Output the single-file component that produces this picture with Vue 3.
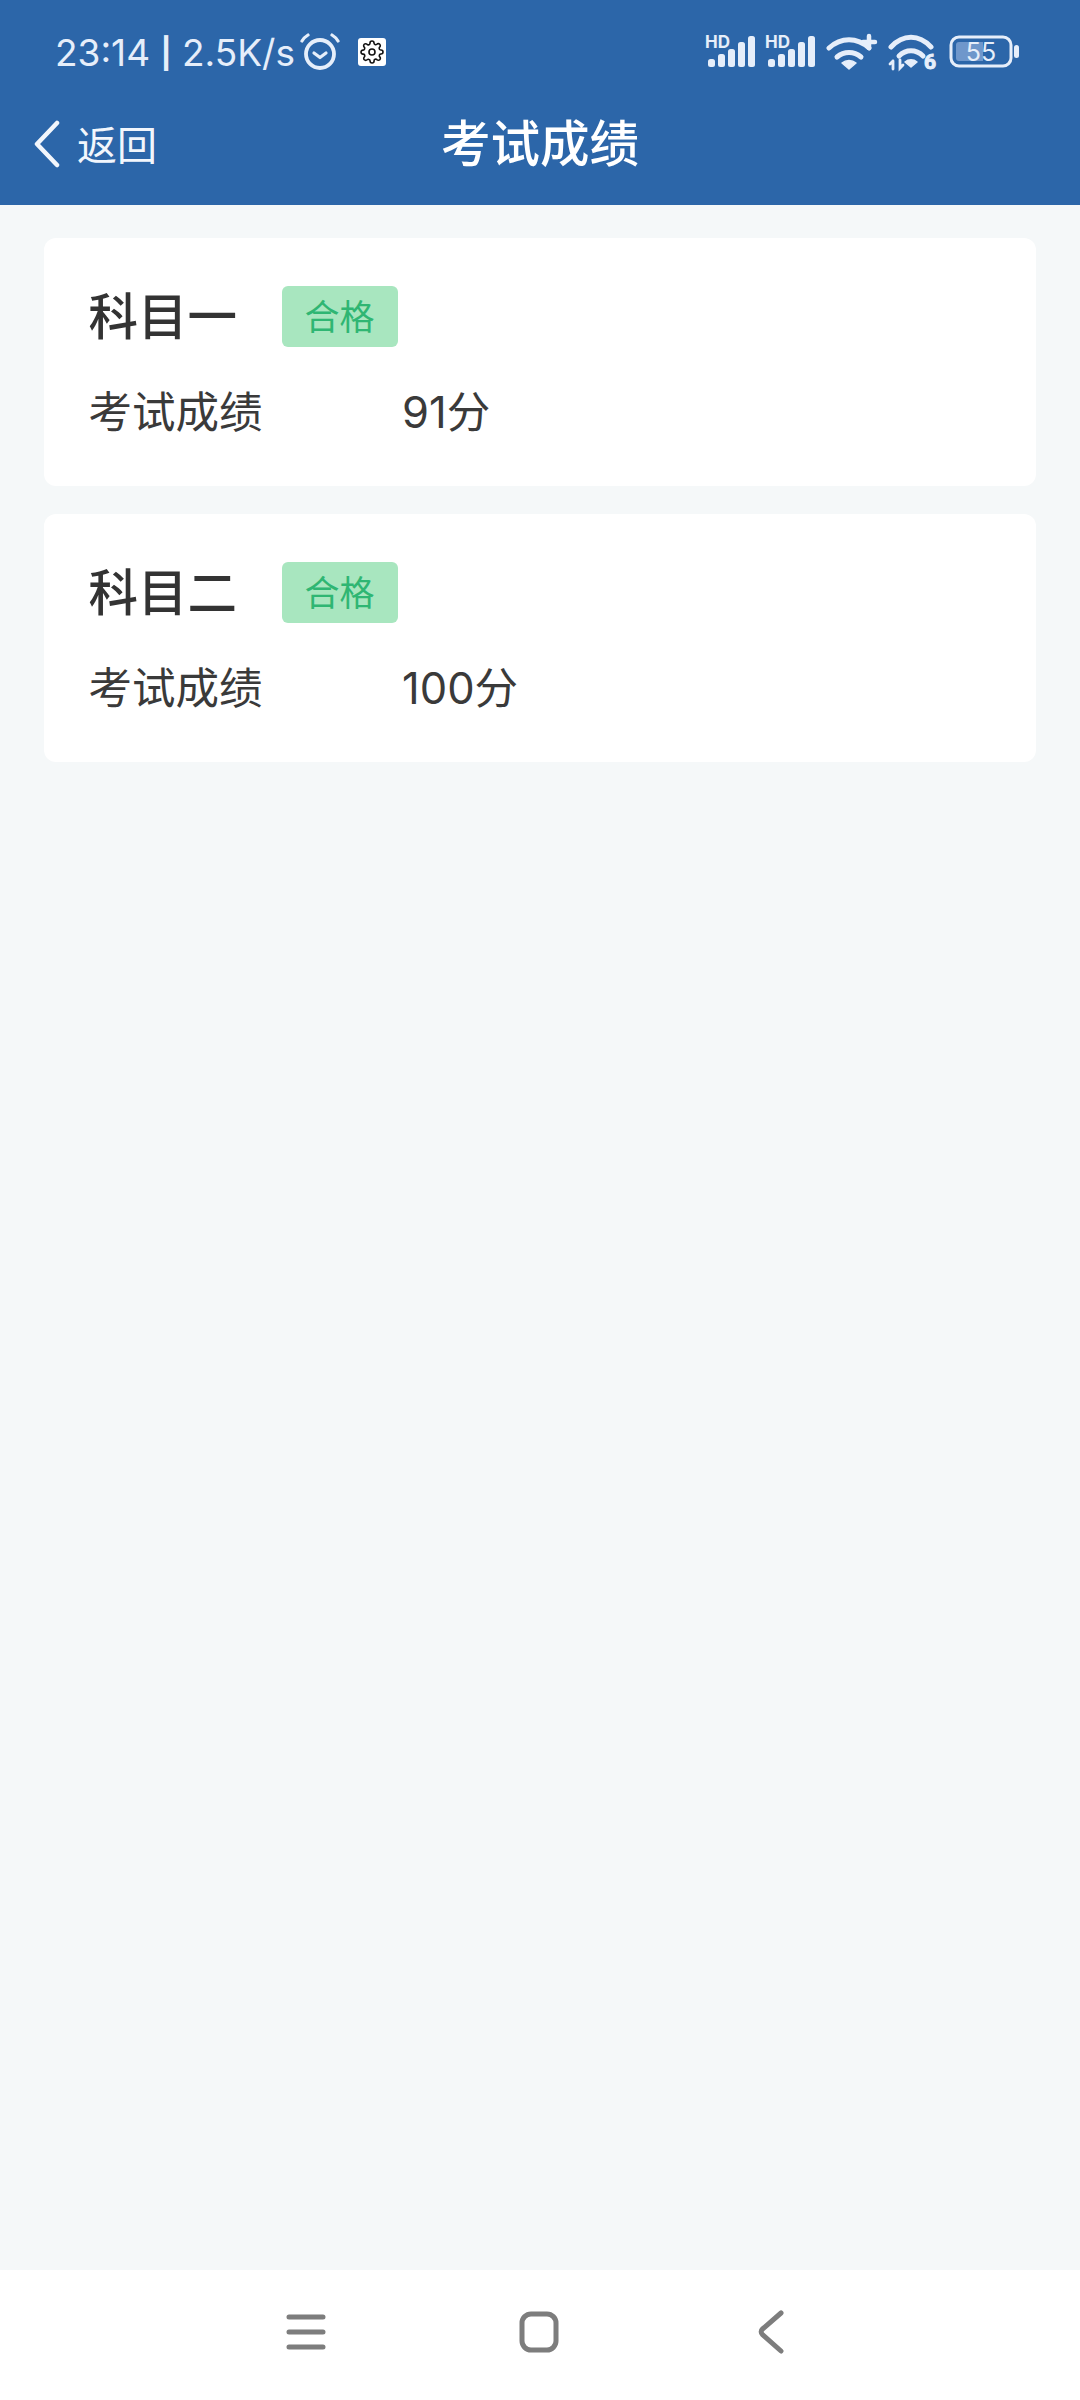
<script setup>
const results = [
  { name: "科目一", status: "合格", score: "91分" },
  { name: "科目二", status: "合格", score: "100分" },
];

const bars = [
  { x: 3, y: 25, h: 8 },
  { x: 13, y: 20, h: 13 },
  { x: 23, y: 15, h: 18 },
  { x: 33, y: 8, h: 25 },
  { x: 43, y: 2, h: 31 },
];
</script>

<template>
  <div class="page">
    <header class="header">
      <div class="status-bar">
        <div class="status-left">
          <span class="clock">23:14 <span class="clock-sep">|</span> 2.5K/s</span>
          <svg class="alarm" width="40" height="38" viewBox="0 0 40 38" fill="none" stroke="#e6eefa" stroke-linecap="round">
            <circle cx="20" cy="21" r="14" stroke-width="3.800" />
            <path d="M14 20l6 4.500 6-4.500" stroke-width="3.200" stroke-linejoin="round" />
            <path d="M2 8c1.500-2.500 3.500-4.500 6-6M38 8c-1.500-2.500-3.500-4.500-6-6" stroke-width="3.200" />
          </svg>
          <span class="gear-box">
            <svg width="24" height="24" viewBox="0 0 24 24" fill="none" stroke="#111" stroke-width="1.600" stroke-linejoin="round">
              <circle cx="12" cy="12" r="3" />
              <path d="M19.400 15a1.650 1.650 0 0 0 .33 1.820l.06.06a2 2 0 0 1 0 2.830 2 2 0 0 1-2.830 0l-.06-.06a1.650 1.650 0 0 0-1.820-.33 1.650 1.650 0 0 0-1 1.510V21a2 2 0 0 1-2 2 2 2 0 0 1-2-2v-.09A1.650 1.650 0 0 0 9 19.400a1.650 1.650 0 0 0-1.820.33l-.06.06a2 2 0 0 1-2.830 0 2 2 0 0 1 0-2.830l.06-.06a1.650 1.650 0 0 0 .33-1.820 1.650 1.650 0 0 0-1.510-1H3a2 2 0 0 1-2-2 2 2 0 0 1 2-2h.09A1.650 1.650 0 0 0 4.600 9a1.650 1.650 0 0 0-.33-1.820l-.06-.06a2 2 0 0 1 0-2.830 2 2 0 0 1 2.830 0l.06.06a1.650 1.650 0 0 0 1.820.33H9a1.650 1.650 0 0 0 1-1.510V3a2 2 0 0 1 2-2 2 2 0 0 1 2 2v.09a1.650 1.650 0 0 0 1 1.510 1.650 1.650 0 0 0 1.820-.33l.06-.06a2 2 0 0 1 2.830 0 2 2 0 0 1 0 2.830l-.06.06a1.650 1.650 0 0 0-.33 1.820V9a1.650 1.650 0 0 0 1.510 1H21a2 2 0 0 1 2 2 2 2 0 0 1-2 2h-.09a1.650 1.650 0 0 0-1.510 1z" />
            </svg>
          </span>
        </div>
        <div class="status-right">
          <svg v-for="n in 2" :key="n" width="52" height="48" viewBox="0 -6 52 48">
            <text x="0" y="14" class="hd">HD</text>
            <rect v-for="bar in bars" :key="bar.x" :x="bar.x" :y="bar.y" width="7" :height="bar.h" rx="2.500" fill="#e6eefa" />
          </svg>
          <svg class="wifi-plus" width="52" height="38" viewBox="0 0 52 38" fill="none" stroke="#e6eefa" stroke-linecap="round">
            <path d="M3 15c12-11 28-11 40 0" stroke-width="5" />
            <path d="M11 24c7-6 17-6 24 0" stroke-width="5" />
            <path d="M23 36l-7-6c4-3.500 10-3.500 14 0z" fill="#e6eefa" stroke="#e6eefa" stroke-width="1.500" stroke-linejoin="round" />
            <path d="M43 3v12M37 9h12" stroke-width="4.500" />
          </svg>
          <svg width="50" height="46" viewBox="0 -4 50 46" fill="none" stroke="#e6eefa" stroke-linecap="round">
            <path d="M3 14c12-13 28-13 40 0" stroke-width="5" />
            <path d="M11 23c7-7 17-7 24 0" stroke-width="5" />
            <path d="M23 34l-6-5c3.500-3 8.500-3 12 0z" fill="#e6eefa" stroke="#e6eefa" stroke-width="1.500" stroke-linejoin="round" />
            <path d="M5 28v8M2 31l3-3M12 27v8l3-3" stroke-width="2.800" />
            <text x="36" y="36" class="six">6</text>
          </svg>
          <svg class="battery" width="70" height="34" viewBox="0 0 70 34">
            <rect x="2" y="2" width="60" height="29" rx="8" fill="none" stroke="#e6eefa" stroke-width="3" />
            <path d="M7 10a3 3 0 0 1 3-3h24v19H10a3 3 0 0 1-3-3z" fill="#6f97cb" />
            <rect x="65" y="10" width="5" height="13" rx="2.500" fill="#e6eefa" />
            <text x="32" y="26" text-anchor="middle" class="level">55</text>
          </svg>
        </div>
      </div>
      <div class="nav-bar">
        <div class="back">
          <svg width="28" height="48" viewBox="0 0 28 48" fill="none" stroke="#f2f6fc" stroke-width="4.500" stroke-linecap="round" stroke-linejoin="round">
            <path d="M24 3L4 24l20 21" />
          </svg>
          <span class="back-text">返回</span>
        </div>
        <h1 class="title">考试成绩</h1>
        <div></div>
      </div>
    </header>

    <main class="content">
      <section v-for="item in results" :key="item.name" class="card">
        <div class="card-head">
          <span class="subject">{{ item.name }}</span>
          <span class="badge">{{ item.status }}</span>
        </div>
        <div class="row">
          <span class="row-label">考试成绩</span>
          <span>{{ item.score }}</span>
        </div>
      </section>
    </main>

    <footer class="system-nav">
      <svg width="42" height="38" viewBox="0 0 42 38" fill="none" stroke="#7d7d7d" stroke-width="5" stroke-linecap="round">
        <path d="M4 4h34M4 19h34M4 34h34" />
      </svg>
      <svg class="home" width="40" height="42" viewBox="0 0 40 42" fill="none" stroke="#7d7d7d" stroke-width="5">
        <rect x="3" y="3" width="34" height="36" rx="9" />
      </svg>
      <svg width="28" height="44" viewBox="0 0 28 44" fill="none" stroke="#7d7d7d" stroke-width="5" stroke-linecap="round" stroke-linejoin="round">
        <path d="M24 3L5.500 19c-1.800 1.600-1.800 4 0 5.600L24 41" />
      </svg>
    </footer>
  </div>
</template>

<style>
html,
body {
  margin: 0;
  background: #f5f8f9;
}
</style>

<style scoped>
.page {
  width: 1080px;
  height: 2400px;
  display: flex;
  flex-direction: column;
  background: #f5f8f9;
  font-family: Inter, "Noto Sans CJK SC", sans-serif;
  color: #333;
}

.header {
  height: 205px;
  background: #2c66a9;
  color: #fff;
}

.status-bar {
  height: 104px;
  display: flex;
  align-items: center;
  justify-content: space-between;
  padding: 0 61px 0 55px;
}

.status-left,
.status-right {
  display: flex;
  align-items: center;
}

.clock {
  width: 245px;
  font-size: 37px;
  color: #e6eefa;
  white-space: nowrap;
}

.clock-sep {
  font-size: 30px;
  font-weight: 700;
  vertical-align: 2px;
}

.alarm {
  margin-left: 0;
}

.gear-box {
  width: 28px;
  height: 28px;
  margin-left: 18px;
  display: flex;
  align-items: center;
  justify-content: center;
  background: #fff;
  border-radius: 3px;
}

.status-right {
  gap: 8px;
}

.hd {
  font-size: 17px;
  font-weight: 700;
  fill: #e6eefa;
}

.six {
  font-family: Roboto, sans-serif;
  font-size: 21px;
  font-weight: 700;
  fill: #e6eefa;
}

.level {
  font-size: 25px;
  fill: #e6eefa;
}

.wifi-plus {
  margin-left: 1px;
  margin-right: 2px;
}

.battery {
  margin-left: 3px;
}

.nav-bar {
  height: 80px;
  display: grid;
  grid-template-columns: 1fr auto 1fr;
  align-items: center;
  padding: 0 33px;
}

.back {
  display: flex;
  align-items: center;
  gap: 16px;
  font-size: 40px;
  color: #f2f6fc;
}

.back-text {
  margin-bottom: 3px;
}

.title {
  margin: 0 0 8px;
  font-size: 49.500px;
  font-weight: 500;
}

.content {
  flex: 1;
  display: flex;
  flex-direction: column;
  gap: 28px;
  padding: 33px 44px;
}

.card {
  height: 248px;
  box-sizing: border-box;
  padding: 48px 45px 0 44.500px;
  background: #fff;
  border-radius: 12px;
}

.card-head {
  display: flex;
  align-items: flex-start;
  gap: 44.500px;
}

.subject {
  padding-top: 1px;
  font-size: 49.500px;
  font-weight: 500;
  line-height: 61px;
}

.badge {
  width: 116px;
  height: 61px;
  box-sizing: border-box;
  padding-bottom: 4px;
  display: flex;
  align-items: center;
  justify-content: center;
  background: #a8e6bf;
  border-radius: 6px;
  font-size: 35px;
  color: #2fb673;
}

.row {
  display: flex;
  margin-top: 34px;
  font-size: 43.500px;
  line-height: 60px;
  color: #3a3a3a;
}

.row-label {
  width: 313.500px;
}

.system-nav {
  height: 130px;
  box-sizing: border-box;
  padding: 0 295px 6px 285px;
  display: flex;
  align-items: center;
  justify-content: space-between;
  background: #fff;
}

.home {
  margin-right: 7px;
}
</style>
